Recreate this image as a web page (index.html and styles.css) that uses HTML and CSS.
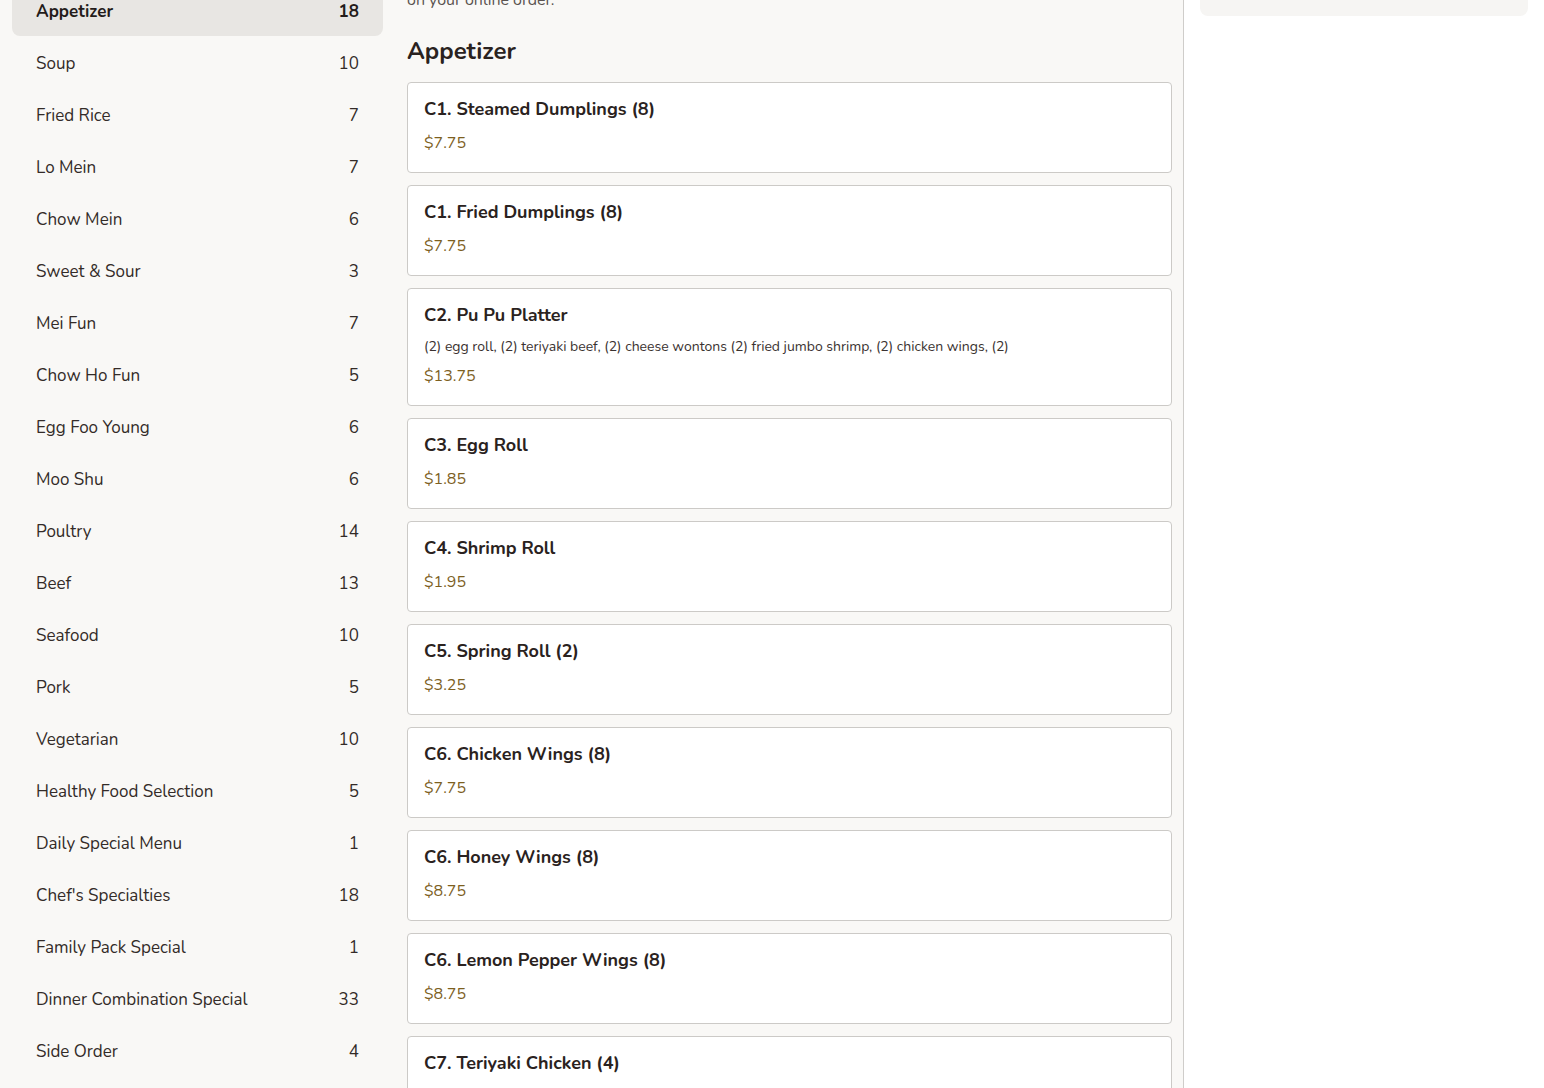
FILE: index.html
```html
<!DOCTYPE html>
<html lang="en">
<head>
<meta charset="utf-8">
<title>Menu</title>
<link rel="stylesheet" href="styles.css">
</head>
<body>
<div class="page">
  <aside class="sidebar">
    <ul class="cats">
      <li class="cat active"><span>Appetizer</span><span>18</span></li>
      <li class="cat"><span>Soup</span><span>10</span></li>
      <li class="cat"><span>Fried Rice</span><span>7</span></li>
      <li class="cat"><span>Lo Mein</span><span>7</span></li>
      <li class="cat"><span>Chow Mein</span><span>6</span></li>
      <li class="cat"><span>Sweet &amp; Sour</span><span>3</span></li>
      <li class="cat"><span>Mei Fun</span><span>7</span></li>
      <li class="cat"><span>Chow Ho Fun</span><span>5</span></li>
      <li class="cat"><span>Egg Foo Young</span><span>6</span></li>
      <li class="cat"><span>Moo Shu</span><span>6</span></li>
      <li class="cat"><span>Poultry</span><span>14</span></li>
      <li class="cat"><span>Beef</span><span>13</span></li>
      <li class="cat"><span>Seafood</span><span>10</span></li>
      <li class="cat"><span>Pork</span><span>5</span></li>
      <li class="cat"><span>Vegetarian</span><span>10</span></li>
      <li class="cat"><span>Healthy Food Selection</span><span>5</span></li>
      <li class="cat"><span>Daily Special Menu</span><span>1</span></li>
      <li class="cat"><span>Chef's Specialties</span><span>18</span></li>
      <li class="cat"><span>Family Pack Special</span><span>1</span></li>
      <li class="cat"><span>Dinner Combination Special</span><span>33</span></li>
      <li class="cat"><span>Side Order</span><span>4</span></li>
    </ul>
  </aside>
  <main class="menu">
    <p class="intro">on your online order.</p>
    <h2 class="section-title">Appetizer</h2>
    <div class="items">
      <div class="item"><div class="item-name">C1. Steamed Dumplings (8)</div><div class="item-price">$7.75</div></div>
      <div class="item"><div class="item-name">C1. Fried Dumplings (8)</div><div class="item-price">$7.75</div></div>
      <div class="item"><div class="item-name">C2. Pu Pu Platter</div><div class="item-desc">(2) egg roll, (2) teriyaki beef, (2) cheese wontons (2) fried jumbo shrimp, (2) chicken wings, (2)</div><div class="item-price">$13.75</div></div>
      <div class="item"><div class="item-name">C3. Egg Roll</div><div class="item-price">$1.85</div></div>
      <div class="item"><div class="item-name">C4. Shrimp Roll</div><div class="item-price">$1.95</div></div>
      <div class="item"><div class="item-name">C5. Spring Roll (2)</div><div class="item-price">$3.25</div></div>
      <div class="item"><div class="item-name">C6. Chicken Wings (8)</div><div class="item-price">$7.75</div></div>
      <div class="item"><div class="item-name">C6. Honey Wings (8)</div><div class="item-price">$8.75</div></div>
      <div class="item"><div class="item-name">C6. Lemon Pepper Wings (8)</div><div class="item-price">$8.75</div></div>
      <div class="item"><div class="item-name">C7. Teriyaki Chicken (4)</div><div class="item-price">$6.95</div></div>
    </div>
  </main>
  <aside class="cart">
    <div class="cart-box"></div>
  </aside>
</div>
</body>
</html>
```
FILE: styles.css
```css
html, body {
  margin: 0;
  padding: 0;
  height: 100%;
  overflow: hidden;
  background: #ffffff;
}
body {
  font-family: "Nunito", Lato, "Noto Sans", sans-serif;
  color: #2a2220;
}
.page {
  display: flex;
  align-items: stretch;
  margin-top: -40px;
  min-height: 1200px;
}
.sidebar {
  width: 371px;
  flex: none;
  padding: 24px 12px 0 12px;
  background: #f9f8f6;
}
.cats {
  list-style: none;
  margin: 0;
  padding: 0;
}
.cat {
  box-sizing: border-box;
  display: flex;
  justify-content: space-between;
  align-items: center;
  height: 52px;
  padding: 2px 24px 0 24px;
  font-size: 17px;
  color: #332b28;
  border-radius: 8px;
}
.cat.active {
  background: #e8e6e3;
  font-weight: 700;
  color: #241c1a;
}
.menu {
  width: 765px;
  flex: none;
  padding: 0 11px 0 12px;
  background: #f9f8f6;
  border-right: 1px solid #cfcdca;
}
.intro {
  margin: 0;
  font-size: 16px;
  line-height: 24px;
  color: #5a5350;
  margin-top: 28px;
}
.section-title {
  margin: 23px 0 15px 0;
  font-size: 24px;
  line-height: 32px;
  font-weight: 700;
  color: #2a2220;
}
.items {
  display: flex;
  flex-direction: column;
  gap: 12px;
}
.item {
  background: #ffffff;
  border: 1px solid #cccac7;
  border-radius: 4px;
  padding: 14px 16px 18px 16px;
}
.item-name {
  font-size: 18px;
  line-height: 24px;
  font-weight: 700;
  color: #2a2220;
}
.item-desc {
  margin-top: 10px;
  font-size: 14px;
  line-height: 20px;
  color: #3a3230;
}
.item-price {
  margin-top: 11px;
  font-size: 16px;
  line-height: 22px;
  color: #7d5f1f;
}
.item-desc + .item-price {
  margin-top: 8px;
}
.cart {
  flex: 1;
  background: #ffffff;
  padding: 0 16px;
}
.cart-box {
  height: 56px;
  background: #f6f5f3;
  border-radius: 0 0 8px 8px;
}
```
